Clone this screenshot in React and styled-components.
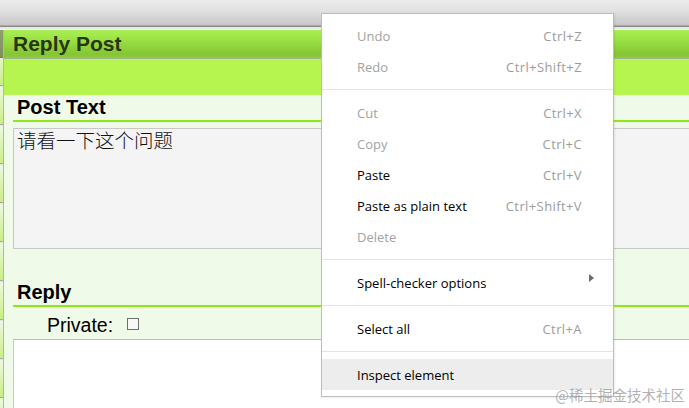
import React from "react";
import styled, { createGlobalStyle } from "styled-components";

const GlobalStyle = createGlobalStyle`
  html, body { margin: 0; padding: 0; background: #ffffff; overflow: hidden; }
  * { box-sizing: border-box; }
`;

const Page = styled.div`
  position: relative;
  width: 689px;
  height: 408px;
  overflow: hidden;
  display: flex;
  flex-direction: column;
  font-family: "Liberation Sans", Arial, "Noto Sans CJK SC", sans-serif;
  background: #ffffff;
`;

const TopBar = styled.div`
  height: 30px;
  flex: none;
  background: linear-gradient(
    to bottom,
    #ececec 0px,
    #e2e2e2 10px,
    #c7c7c7 25px,
    #8a8a8a 26px,
    #8a8a8a 27px,
    #e6e6e6 27px,
    #f2f2f2 30px
  );
`;

const Body = styled.div`
  flex: 1;
  display: flex;
  min-height: 0;
`;

const LeftStrip = styled.div`
  width: 4px;
  flex: none;
  display: flex;
  flex-direction: column;
  border-right: 1px solid #b4b4b4;
`;

const StripHead = styled.div`
  height: 28px;
  background: linear-gradient(to bottom, #8fa070, #7f9060);
  border-bottom: 1px solid #6f7f58;
`;

const StripCells = styled.div`
  flex: 1;
  background: repeating-linear-gradient(
    to bottom,
    #eef8e2 0px,
    #c8ef82 37px,
    #a8a8a8 37px,
    #a8a8a8 38px,
    #e4e4e4 38px,
    #e4e4e4 39px
  );
  background-position: 0 -10px;
`;

const Panel = styled.div`
  flex: 1;
  min-width: 0;
  display: flex;
  flex-direction: column;
  background: #f0fae8;
`;

const PanelHeader = styled.div`
  height: 29px;
  flex: none;
  padding-left: 9px;
  line-height: 28px;
  font-size: 21px;
  font-weight: bold;
  color: #283612;
  white-space: nowrap;
  background: linear-gradient(
    to bottom,
    #a8ef52 0px,
    #a0e64a 7px,
    #94d840 14px,
    #86c634 24px,
    #8ccc38 28px
  );
  border-bottom: 1px solid #a4b894;
`;

const LimeBand = styled.div`
  height: 36px;
  flex: none;
  background: #b6f550;
`;

const Section = styled.div`
  display: flex;
  flex-direction: column;
  padding-left: 9px;
  flex: ${(p) => (p.$grow ? 1 : "none")};
  min-height: 0;
`;

const SectionTitle = styled.div`
  line-height: 21px;
  padding: 2px 0 2px 4px;
  margin-top: ${(p) => p.$top || 0}px;
  font-size: 20px;
  font-weight: bold;
  color: #000000;
  border-bottom: 2px solid #90e818;
  white-space: nowrap;
`;

const TextBox = styled.div`
  margin-top: 6px;
  height: 121px;
  border: 1px solid #c8c8c8;
  border-right: none;
  background: #f4f4f4;
  padding: 0 3px;
  font-family: "Noto Sans CJK SC", "Liberation Sans", sans-serif;
  font-size: 19.5px;
  font-weight: 300;
  line-height: 22px;
  color: #111111;
`;

const FieldRow = styled.div`
  height: 32px;
  padding: 4px 0 0 34px;
  display: flex;
  align-items: center;
  line-height: 28px;
  font-size: 19.5px;
  color: #000000;
`;

const FieldLabel = styled.span`
  height: 28px;
`;

const CheckBox = styled.span`
  display: inline-block;
  width: 12px;
  height: 12px;
  margin: 0 0 2px 14px;
  border: 1px solid #707070;
  background: #f8f8f8;
`;

const ReplyBox = styled.div`
  flex: 1;
  border-top: 1px solid #e0b56c;
  border-left: 1px solid #e6c792;
  background: #ffffff;
`;

/* ---------- context menu ---------- */

const Menu = styled.div`
  position: absolute;
  left: 321px;
  top: 13px;
  width: 293px;
  padding: 6px 0 6px;
  background: #ffffff;
  border: 1px solid #bcbcbc;
  box-shadow: 1px 1px 2px rgba(0, 0, 0, 0.08);
  font-family: "Open Sans", "Noto Sans", sans-serif;
  font-size: 13px;
`;

const MenuItem = styled.div`
  height: 31px;
  display: flex;
  align-items: center;
  justify-content: space-between;
  padding: 0 31px 0 35px;
  white-space: nowrap;
  color: ${(p) => (p.$disabled ? "#a2a2a2" : "#000000")};
  background: ${(p) => (p.$active ? "#ededed" : "transparent")};
`;

const Shortcut = styled.span`
  color: #9c9c9c;
  letter-spacing: 0.4px;
  display: flex;
  align-items: center;
`;

const Separator = styled.div`
  height: 1px;
  margin: 7px 0 7px;
  background: #e3e3e3;
`;

const SubArrow = styled.svg`
  width: 5px;
  height: 8px;
  margin-right: -12px;
  margin-top: -10px;
`;

const Watermark = styled.div`
  position: absolute;
  right: 4px;
  bottom: 3px;
  font-family: "Noto Sans CJK SC", sans-serif;
  font-size: 14.5px;
  line-height: 20px;
  color: rgba(150, 150, 150, 0.75);
  white-space: nowrap;
`;

const menu = [
  { label: "Undo", sc: "Ctrl+Z", disabled: true },
  { label: "Redo", sc: "Ctrl+Shift+Z", disabled: true },
  { sep: true },
  { label: "Cut", sc: "Ctrl+X", disabled: true },
  { label: "Copy", sc: "Ctrl+C", disabled: true },
  { label: "Paste", sc: "Ctrl+V" },
  { label: "Paste as plain text", sc: "Ctrl+Shift+V" },
  { label: "Delete", disabled: true },
  { sep: true },
  { label: "Spell-checker options", sub: true },
  { sep: true },
  { label: "Select all", sc: "Ctrl+A" },
  { sep: true },
  { label: "Inspect element", active: true },
];

export default function App() {
  return (
    <>
      <GlobalStyle />
      <Page>
        <TopBar />
        <Body>
          <LeftStrip>
            <StripHead />
            <StripCells />
          </LeftStrip>
          <Panel>
            <PanelHeader>Reply Post</PanelHeader>
            <LimeBand />
            <Section>
              <SectionTitle>Post Text</SectionTitle>
              <TextBox>请看一下这个问题</TextBox>
            </Section>
            <Section $grow>
              <SectionTitle $top={31}>Reply</SectionTitle>
              <FieldRow>
                <FieldLabel>Private:</FieldLabel>
                <CheckBox />
              </FieldRow>
              <ReplyBox />
            </Section>
          </Panel>
        </Body>

        <Menu>
          {menu.map((m, i) =>
            m.sep ? (
              <Separator key={i} />
            ) : (
              <MenuItem key={i} $disabled={m.disabled} $active={m.active}>
                <span>{m.label}</span>
                {m.sc && <Shortcut>{m.sc}</Shortcut>}
                {m.sub && (
                  <SubArrow viewBox="0 0 5 8">
                    <path d="M0 0 L5 4 L0 8 Z" fill="#6a6a6a" />
                  </SubArrow>
                )}
              </MenuItem>
            )
          )}
        </Menu>

        <Watermark>@稀土掘金技术社区</Watermark>
      </Page>
    </>
  );
}
